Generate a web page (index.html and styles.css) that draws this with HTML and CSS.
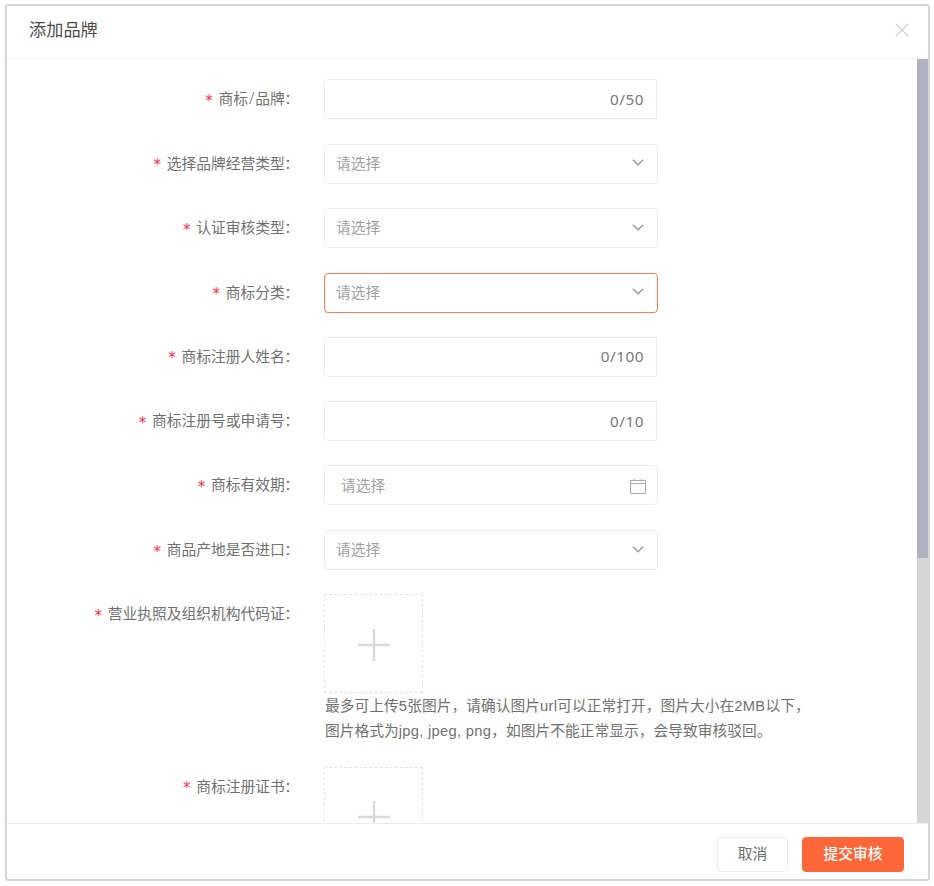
FILE: index.html
```html
<!DOCTYPE html>
<html lang="zh-CN">
<head>
<meta charset="utf-8">
<title>添加品牌</title>
<link rel="stylesheet" href="styles.css">
</head>
<body>
<section class="dialog">
  <header class="header">
    <h1 class="title">添加品牌</h1>
    <svg class="close" viewBox="0 0 14 14"><path d="M.7.7 13.3 13.3M13.3.7.7 13.3"/></svg>
  </header>
  <div class="body">
    <form class="form">
      <div class="row"><div class="label"><i class="star">*</i>商标<span class="slash">/</span>品牌<span class="colon">：</span></div><div class="field input"><span class="count">0/50</span></div></div>
      <div class="row"><div class="label"><i class="star">*</i>选择品牌经营类型<span class="colon">：</span></div><div class="field"><span>请选择</span><svg class="arrow" viewBox="0 0 12 7"><path d="M.8.8 6 5.8 11.2.8"/></svg></div></div>
      <div class="row"><div class="label"><i class="star">*</i>认证审核类型<span class="colon">：</span></div><div class="field"><span>请选择</span><svg class="arrow" viewBox="0 0 12 7"><path d="M.8.8 6 5.8 11.2.8"/></svg></div></div>
      <div class="row"><div class="label"><i class="star">*</i>商标分类<span class="colon">：</span></div><div class="field active"><span>请选择</span><svg class="arrow" viewBox="0 0 12 7"><path d="M.8.8 6 5.8 11.2.8"/></svg></div></div>
      <div class="row"><div class="label"><i class="star">*</i>商标注册人姓名<span class="colon">：</span></div><div class="field input"><span class="count">0/100</span></div></div>
      <div class="row"><div class="label"><i class="star">*</i>商标注册号或申请号<span class="colon">：</span></div><div class="field input"><span class="count">0/10</span></div></div>
      <div class="row date-row"><div class="label"><i class="star">*</i>商标有效期<span class="colon">：</span></div><div class="field date"><span>请选择</span><svg class="calendar" viewBox="0 0 16 15"><path d="M.5 1.5h15v13H.5zM.5 4.5h15M4.500 0v2.500M11.500 0v2.500"/></svg></div></div>
      <div class="row"><div class="label"><i class="star">*</i>商品产地是否进口<span class="colon">：</span></div><div class="field"><span>请选择</span><svg class="arrow" viewBox="0 0 12 7"><path d="M.8.8 6 5.8 11.2.8"/></svg></div></div>
      <div class="row upload-row">
        <div class="label"><i class="star">*</i>营业执照及组织机构代码证<span class="colon">：</span></div>
        <div class="upload-area">
          <div class="upload"><svg class="plus" viewBox="0 0 32 32"><path d="M0 16h32M16 0v32"/></svg></div>
          <p class="tip">最多可上传<span class="latin">5</span>张图片，请确认图片<span class="latin">url</span>可以正常打开，图片大小在<span class="latin">2MB</span>以下，<br>图片格式为<span class="latin">jpg, jpeg, png</span>，如图片不能正常显示，会导致审核驳回。</p>
        </div>
      </div>
      <div class="row upload-row">
        <div class="label"><i class="star">*</i>商标注册证书<span class="colon">：</span></div>
        <div class="upload-area">
          <div class="upload"><svg class="plus" viewBox="0 0 32 32"><path d="M0 16h32M16 0v32"/></svg></div>
        </div>
      </div>
    </form>
    <div class="scrollbar"><div class="thumb"></div></div>
  </div>
  <footer class="footer">
    <button class="btn">取消</button>
    <button class="btn primary">提交审核</button>
  </footer>
</section>
</body>
</html>
```
FILE: styles.css
```css
* {
  box-sizing: border-box;
}

body {
  margin: 0;
  padding: 4px 4px 5px 5px;
  height: 886px;
  overflow: hidden;
  background: #fff;
  color: #707070;
  font: 14.75px/24.6px "Liberation Sans", "Noto Sans CJK SC", sans-serif;
}

.dialog {
  display: flex;
  flex-direction: column;
  height: 877px;
  border: 2px solid #d5d5d5;
  border-radius: 3px;
}

.header {
  display: flex;
  flex: none;
  justify-content: space-between;
  align-items: center;
  height: 53px;
  padding: 0 19px 4px 22px;
  border-bottom: 1px solid #f0f0f0;
}

.title {
  margin: 0;
  color: #4c4c4c;
  font-size: 17.2px;
  font-weight: 400;
}

.close {
  width: 14px;
  height: 14px;
  fill: none;
  stroke: #d4d4d4;
  stroke-width: 1.4;
}

.body {
  display: flex;
  flex: 1;
  min-height: 0;
}

.form {
  flex: 1;
  padding-top: 20.4px;
  overflow: hidden;
}

.row {
  display: flex;
  height: 64.4px;
}

.date-row {
  height: 64.7px;
  margin-top: -.4px;
}

.upload-row {
  height: 172.5px;
}

.label {
  flex: none;
  width: 292.5px;
  margin-right: 24.5px;
  line-height: 40px;
  text-align: right;
  white-space: nowrap;
}

.slash {
  padding: 0 .8px;
  font: 300 16px/1 "Noto Sans", sans-serif;
}

.colon {
  margin: 0 .6px 0 -.6px;
}

.star {
  margin-right: 5px;
  color: #f5304a;
  font: 15px/1 "DejaVu Sans Mono", monospace;
  vertical-align: -1.5px;
}

.field {
  display: flex;
  justify-content: space-between;
  align-items: center;
  width: 334px;
  height: 40px;
  padding: 1px 13px 0 11px;
  border: 1px solid #ececec;
  border-radius: 4px;
  color: #a0a0a0;
}

.input {
  justify-content: flex-end;
  width: 333px;
  padding: 0 12px 1px;
  border-radius: 4px 0 0 4px;
  color: #777;
}

.count {
  font-family: "Noto Sans", sans-serif;
  font-size: 15.3px;
  letter-spacing: .5px;
}

.active {
  border-color: #fc7b54;
}

.date {
  padding: 2px 11px 0 16px;
}

.arrow {
  width: 12px;
  height: 7px;
  margin-bottom: 3px;
  fill: none;
  stroke: #999;
  stroke-width: 1.5;
}

.calendar {
  width: 16px;
  height: 15px;
  fill: none;
  stroke: #aaa;
}

.upload {
  display: flex;
  justify-content: center;
  align-items: center;
  width: 99px;
  height: 99px;
  padding-top: 2px;
  border: 1px dashed #e5e5e5;
}

.plus {
  width: 32px;
  height: 32px;
  stroke: #d9d9d9;
  stroke-width: 2.4;
}

.tip {
  margin: 0;
  padding: .6px 0 0 1px;
  white-space: nowrap;
}

.latin {
  letter-spacing: .28px;
}

.scrollbar {
  width: 11px;
  background: #d6d6d6;
}

.thumb {
  height: 499px;
  background: #afb1bf;
}

.footer {
  display: flex;
  flex: none;
  justify-content: flex-end;
  height: 56px;
  padding: 13px 24px 0 0;
  gap: 14px;
  border-top: 1px solid #ebebeb;
}

.btn {
  width: 71px;
  height: 35px;
  padding: 0;
  border: 1px solid #ececec;
  border-radius: 4px;
  background: #fff;
  color: #6c6c6c;
  font: inherit;
}

.primary {
  width: 102px;
  border-color: #fd6639;
  background: #fd6639;
  color: #fff;
  font-weight: 500;
}
```
